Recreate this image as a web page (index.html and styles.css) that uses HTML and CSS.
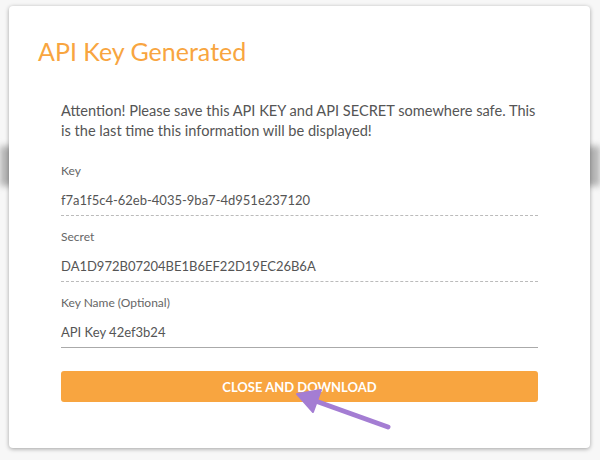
FILE: index.html
```html
<!DOCTYPE html>
<html lang="en">
<head>
  <meta charset="UTF-8" />
  <title>API Key Generated</title>
  <meta name="viewport" content="width=device-width, initial-scale=1" />
  <link rel="stylesheet" href="styles.css">
</head>
<body>

  <!-- Page derrière la modale -->
  <div class="backdrop-bar"></div>

  <!-- Modale -->
  <div class="modal">
    <h1 class="modal-title">API Key Generated</h1>

    <div class="modal-body">
      <p class="warning">Attention! Please save this API KEY and API SECRET somewhere safe. This<br>is the last time this information will be displayed!</p>

      <div class="field">
        <label>Key</label>
        <div class="value">f7a1f5c4-62eb-4035-9ba7-4d951e237120</div>
      </div>

      <div class="field">
        <label>Secret</label>
        <div class="value">DA1D972B07204BE1B6EF22D19EC26B6A</div>
      </div>

      <div class="field editable">
        <label>Key Name (Optional)</label>
        <div class="value">API Key 42ef3b24</div>
      </div>

      <button class="btn-download">CLOSE AND DOWNLOAD</button>
    </div>
  </div>

  <!-- Flèche d'annotation -->
  <svg class="annotation" width="600" height="460" viewBox="0 0 600 460">
    <line x1="388" y1="427" x2="310" y2="399" stroke="#a47dd3" stroke-width="5" stroke-linecap="round" />
    <polygon points="297,394 321,390 313,412" fill="#a47dd3" stroke="#a47dd3" stroke-width="2" stroke-linejoin="round" />
  </svg>

</body>
</html>
```

FILE: styles.css
```css
:root {
  --orange: #f8a540;
  --texte: #555;
  --label: #666;
}

body {
  margin: 0;
  font-family: Lato, "Open Sans", sans-serif;
  background: #f7f7f7;
  position: relative;
  height: 460px;
  overflow: hidden;
}

.backdrop-bar {
  position: absolute;
  left: 0;
  right: 0;
  top: 146px;
  height: 40px;
  background: #b3b3b3;
  filter: blur(3px);
}

.modal {
  position: relative;
  z-index: 1;
  margin: 6px 10px 0 9px;
  height: 442px;
  box-sizing: border-box;
  background: white;
  border-radius: 4px;
  box-shadow: 0 1px 4px rgba(0,0,0,0.35);
  padding: 30px 52px 0 52px;
}

.modal-title {
  margin: 0 0 35px -23px;
  font-size: 25px;
  line-height: 30px;
  font-weight: normal;
  color: var(--orange);
}

.warning {
  margin: 0 0 22px;
  font-size: 14.6px;
  line-height: 20px;
  color: var(--texte);
  white-space: nowrap;
}

.field {
  margin-top: 13px;
  padding-bottom: 5px;
  border-bottom: 1px dashed #bbb;
}

.field:first-of-type {
  margin-top: 0;
}

.field label {
  display: block;
  font-size: 12px;
  line-height: 16px;
  color: var(--label);
}

.field .value {
  margin-top: 11px;
  font-size: 13px;
  line-height: 20px;
  color: var(--texte);
}

.field.editable {
  border-bottom: 1px solid #aaa;
}

.btn-download {
  display: block;
  width: 100%;
  margin-top: 23px;
  height: 31px;
  border: none;
  border-radius: 3px;
  background: var(--orange);
  color: white;
  font-family: Lato, sans-serif;
  font-weight: bold;
  font-size: 13px;
  cursor: pointer;
}

.annotation {
  position: absolute;
  left: 0;
  top: 0;
  z-index: 2;
  pointer-events: none;
}
```
